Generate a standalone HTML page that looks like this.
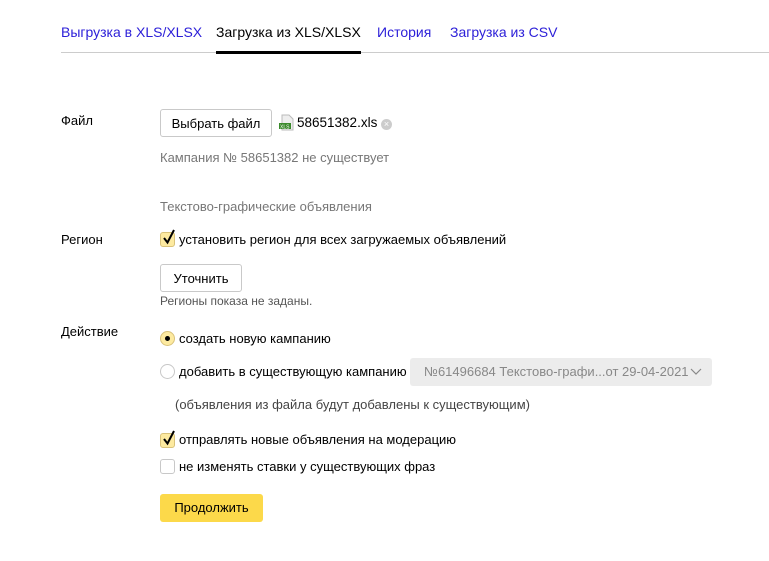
<!DOCTYPE html>
<html><head><meta charset="utf-8"><style>
*{margin:0;padding:0;box-sizing:border-box}
body{width:769px;height:561px;background:#fff;font-family:"Liberation Sans",sans-serif;font-size:13px;color:#000;position:relative;overflow:hidden}
.a{position:absolute;white-space:nowrap}
.tab{position:absolute;top:24px;font-size:14px;color:#2b1ed8}
.g{color:#777}
.btn{position:absolute;border:1px solid #c9c9c9;border-radius:3px;background:#fff;display:flex;align-items:center;justify-content:center}
.cb{position:absolute;width:15px;height:15px;border:1px solid #c8c8c8;border-radius:3px;background:#fff}
.cb.on{background:#fdeaa0;border-color:#d9c27a}
.rd{position:absolute;width:15px;height:15px;border:1px solid #c8c8c8;border-radius:50%;background:#fff}
.rd.on{background:#fdeaa0;border-color:#d9c27a}
.rd.on::after{content:"";position:absolute;left:4px;top:4px;width:5px;height:5px;border-radius:50%;background:#000}
</style></head><body>
<div class="tab" style="left:61px">Выгрузка в XLS/XLSX</div>
<div class="tab" style="left:216px;color:#000">Загрузка из XLS/XLSX</div>
<div class="tab" style="left:377px">История</div>
<div class="tab" style="left:450px">Загрузка из CSV</div>
<div class="a" style="left:61px;top:52px;width:708px;height:1px;background:#ccc"></div>
<div class="a" style="left:216px;top:51px;width:145px;height:3px;background:#000"></div>

<div class="a" style="left:61px;top:113px">Файл</div>
<div class="btn" style="left:160px;top:109px;width:112px;height:28px">Выбрать файл</div>
<svg class="a" style="left:279px;top:114px" width="15" height="17" viewBox="0 0 15 17"><path d="M3 1h7l4 4v11H3z" fill="#eee" stroke="#bbb"/><rect x="0" y="9" width="12" height="6" fill="#3b8a2c"/><text x="1" y="14.3" font-size="5" fill="#fff" font-family="Liberation Sans">XLS</text></svg>
<div class="a" style="left:297px;top:115px;font-size:13.5px">58651382.xls</div>
<div class="a" style="left:381px;top:119px;width:11px;height:11px;border-radius:50%;background:#ccc;color:#fff;font-size:9px;line-height:11px;text-align:center">×</div>
<div class="a g" style="left:160px;top:150px">Кампания № 58651382 не существует</div>
<div class="a g" style="left:160px;top:199px">Текстово-графические объявления</div>

<div class="a" style="left:61px;top:232px">Регион</div>
<div class="cb on" style="left:160px;top:232px"></div>
<svg class="a" style="left:161px;top:228px" width="16" height="18"><path d="M3 10l3.5 4.5L13 2" fill="none" stroke="#000" stroke-width="2"/></svg>
<div class="a" style="left:179px;top:232px">установить регион для всех загружаемых объявлений</div>
<div class="btn" style="left:160px;top:264px;width:82px;height:28px">Уточнить</div>
<div class="a" style="left:160px;top:294px;font-size:12px;color:#555">Регионы показа не заданы.</div>

<div class="a" style="left:61px;top:324px">Действие</div>
<div class="rd on" style="left:160px;top:331px"></div>
<div class="a" style="left:179px;top:331px">создать новую кампанию</div>
<div class="rd" style="left:160px;top:364px"></div>
<div class="a" style="left:179px;top:364px">добавить в существующую кампанию</div>
<div class="a" style="left:410px;top:358px;width:302px;height:28px;background:#ececec;border-radius:3px;color:#888;font-size:13px;padding:6px 0 0 14px">№61496684 Текстово-графи...от 29-04-2021</div>
<svg class="a" style="left:690px;top:367px" width="12" height="10"><path d="M1 2l5 5 5-5" fill="none" stroke="#888" stroke-width="1.2"/></svg>
<div class="a" style="left:175px;top:397px;color:#444">(объявления из файла будут добавлены к существующим)</div>
<div class="cb on" style="left:160px;top:433px"></div>
<svg class="a" style="left:161px;top:429px" width="16" height="18"><path d="M3 10l3.5 4.5L13 2" fill="none" stroke="#000" stroke-width="2"/></svg>
<div class="a" style="left:179px;top:432px">отправлять новые объявления на модерацию</div>
<div class="cb" style="left:160px;top:459px"></div>
<div class="a" style="left:179px;top:459px">не изменять ставки у существующих фраз</div>
<div class="a" style="left:160px;top:494px;width:103px;height:28px;background:#fcd94a;border-radius:3px;text-align:center;line-height:28px">Продолжить</div>
</body></html>
